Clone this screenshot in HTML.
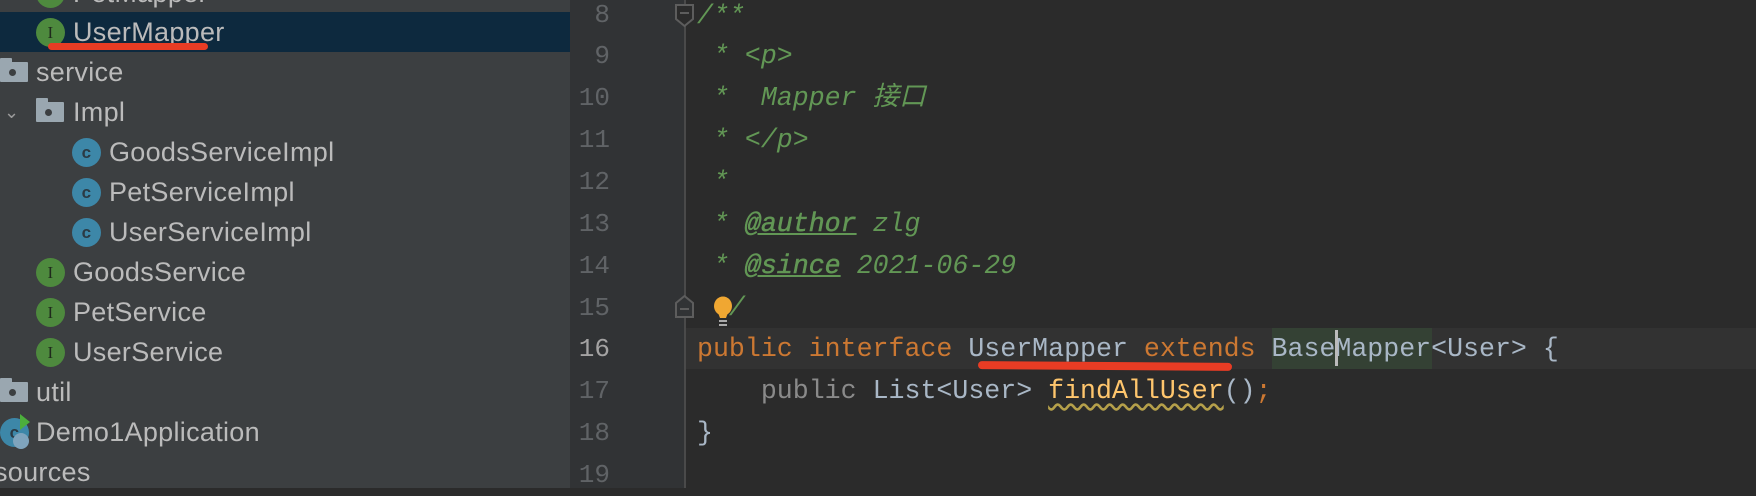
<!DOCTYPE html>
<html><head><meta charset="utf-8"><style>
*{margin:0;padding:0;box-sizing:border-box}
body{width:1756px;height:488px;overflow:hidden;background:#2b2b2b;position:relative;font-family:"Liberation Sans","Noto Sans CJK SC",sans-serif}
#side{position:absolute;left:0;top:0;width:570px;height:488px;background:#3c3f41}
.row{position:absolute;left:0;width:570px;height:40px;color:#bbbbbb;font-size:27px;letter-spacing:0.3px;line-height:40px}
.row span{position:absolute;top:0}
.ic{position:absolute;width:29px;height:29px;border-radius:50%;top:6px;font-family:"Liberation Serif",serif;font-size:17px;line-height:29px;text-align:center;color:#1f2a1c}
.ii{background:#4e8a3e}
.ci{background:#3d87a8;font-family:"Liberation Sans",sans-serif;font-weight:bold;color:#2b3a44}
.fold{position:absolute;top:10px;width:28px;height:20px;background:#9aa7b0;border-radius:1px}
.fold:before{content:"";position:absolute;left:0;top:-4px;width:12px;height:5px;background:#9aa7b0;border-radius:1px 1px 0 0}
.fold:after{content:"";position:absolute;left:9px;top:7px;width:7px;height:7px;border-radius:50%;background:#3c3f41}
#gut{position:absolute;left:570px;top:0;width:114px;height:488px;background:#313335}
#fl{position:absolute;left:684px;top:0;width:2px;height:488px;background:#4a4a4a}
.ln{position:absolute;left:560px;width:50px;text-align:right;font-family:"Liberation Mono",monospace;font-size:26px;color:#606366;height:42px;line-height:42px}
.cl{position:absolute;left:697px;height:42px;line-height:42px;font-family:"Liberation Mono","Noto Sans CJK SC",monospace;font-size:26.6px;white-space:pre;color:#a9b7c6}
.cm{color:#629755;font-style:italic}
.tg{color:#629755;font-style:italic;text-decoration:underline;-webkit-text-stroke:0.5px #629755}
.kw{color:#cc7832}
.fn{color:#ffc66d;text-decoration:underline wavy #b5a04a;text-underline-offset:5px}
</style></head><body>
<div id="side">
 <div style="position:absolute;left:0;top:12px;width:570px;height:40px;background:#0d293e"></div>
 <div class="row" style="top:-27px"><div class="ic ii" style="left:36px">I</div><span style="left:73px">PetMapper</span></div>
 <div class="row" style="top:12px"><div class="ic ii" style="left:36px">I</div><span style="left:73px">UserMapper</span></div>
 <div class="row" style="top:52px"><div class="fold" style="left:0"></div><span style="left:36px">service</span></div>
 <div class="row" style="top:92px"><span style="left:4px;font-size:18px;color:#9a9a9a">&#8964;</span><div class="fold" style="left:36px"></div><span style="left:73px">Impl</span></div>
 <div class="row" style="top:132px"><div class="ic ci" style="left:72px">c</div><span style="left:109px">GoodsServiceImpl</span></div>
 <div class="row" style="top:172px"><div class="ic ci" style="left:72px">c</div><span style="left:109px">PetServiceImpl</span></div>
 <div class="row" style="top:212px"><div class="ic ci" style="left:72px">c</div><span style="left:109px">UserServiceImpl</span></div>
 <div class="row" style="top:252px"><div class="ic ii" style="left:36px">I</div><span style="left:73px">GoodsService</span></div>
 <div class="row" style="top:292px"><div class="ic ii" style="left:36px">I</div><span style="left:73px">PetService</span></div>
 <div class="row" style="top:332px"><div class="ic ii" style="left:36px">I</div><span style="left:73px">UserService</span></div>
 <div class="row" style="top:372px"><div class="fold" style="left:0"></div><span style="left:36px">util</span></div>
 <div class="row" style="top:412px"><div class="ic ci" style="left:0">c</div><div style="position:absolute;left:20px;top:2px;width:0;height:0;border-top:8px solid transparent;border-bottom:8px solid transparent;border-left:10px solid #4caf3c"></div><div style="position:absolute;left:13px;top:21px;width:16px;height:16px;border-radius:50%;background:#7fa4bd"></div><span style="left:36px">Demo1Application</span></div>
 <div class="row" style="top:452px"><span style="left:-6px">sources</span></div>
 <div style="position:absolute;left:48px;top:43px;width:160px;height:7px;background:#e83c24;border-radius:4px"></div>
</div>
<div id="gut"></div>
<div style="position:absolute;left:686px;top:328px;width:1070px;height:41px;background:#323232"></div>
<div style="position:absolute;left:1272px;top:328px;width:160px;height:41px;background:#344134"></div>
<div id="fl"></div>
<svg style="position:absolute;left:674px;top:4px" width="22" height="24"><path d="M2 1H19V15L10.5 22L2 15Z" fill="#2b2b2b" stroke="#5d5d5d" stroke-width="2"/><path d="M6 9H15" stroke="#5d5d5d" stroke-width="2"/></svg>
<svg style="position:absolute;left:674px;top:294px" width="22" height="24"><path d="M2 23H19V9L10.5 2L2 9Z" fill="#313335" stroke="#5d5d5d" stroke-width="2"/><path d="M6 15H15" stroke="#5d5d5d" stroke-width="2"/></svg>
<div class="ln" style="top:-6px">8</div>
<div class="ln" style="top:35px">9</div>
<div class="ln" style="top:77px">10</div>
<div class="ln" style="top:119px">11</div>
<div class="ln" style="top:161px">12</div>
<div class="ln" style="top:203px">13</div>
<div class="ln" style="top:245px">14</div>
<div class="ln" style="top:287px">15</div>
<div class="ln" style="top:328px;color:#a4a3a3">16</div>
<div class="ln" style="top:370px">17</div>
<div class="ln" style="top:412px">18</div>
<div class="ln" style="top:454px">19</div>
<div class="cl cm" style="top:-5px">/**</div>
<div class="cl cm" style="top:35px"> * &lt;p&gt;</div>
<div class="cl cm" style="top:77px"> *  Mapper 接口</div>
<div class="cl cm" style="top:119px"> * &lt;/p&gt;</div>
<div class="cl cm" style="top:161px"> *</div>
<div class="cl cm" style="top:203px"> * <span class="tg">@author</span> zlg</div>
<div class="cl cm" style="top:245px"> * <span class="tg">@since</span> 2021-06-29</div>
<div class="cl cm" style="top:287px">  /</div>
<svg style="position:absolute;left:712px;top:296px" width="24" height="32"><ellipse cx="11" cy="10" rx="9" ry="9.5" fill="#f0a732"/><path d="M5 14L8 22H14L17 14Z" fill="#f0a732"/><path d="M7 25H15M7 29H15" stroke="#aaaaaa" stroke-width="2"/></svg>
<div class="cl" style="top:328px"><span class="kw">public interface </span>UserMapper <span class="kw">extends </span>BaseMapper&lt;User&gt; {</div>
<div style="position:absolute;left:1335px;top:330px;width:3px;height:36px;background:#bbbbbb"></div>
<div class="cl" style="top:370px">    <span style="color:#8a8a8a">public </span>List&lt;User&gt; <span class="fn">findAllUser</span>()<span class="kw">;</span></div>
<div class="cl" style="top:412px">}</div>
<div style="position:absolute;left:978px;top:362px;width:254px;height:8px;background:#e83c24;border-radius:4px;transform:rotate(0.4deg)"></div>
</body></html>
